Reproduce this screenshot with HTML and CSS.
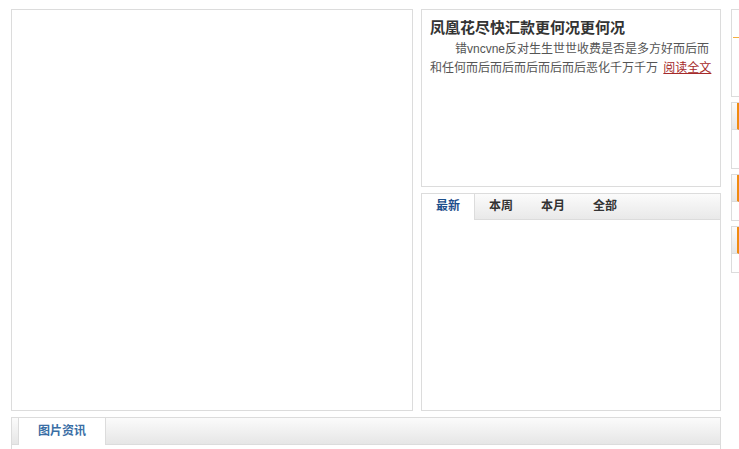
FILE: index.html
```html
<!DOCTYPE html>
<html lang="zh-CN">
<head>
  <meta charset="UTF-8">
  <title>首页</title>
  <link rel="stylesheet" href="styles.css">
</head>
<body>
  <div class="page">
    <div class="main">
      <div class="top-row">
        <div class="box focus-box"></div>
        <div class="side">
          <div class="box news-box">
            <h2 class="news-title">凤凰花尽快汇款更何况更何况</h2>
            <p class="news-text">错vncvne反对生生世世收费是否是多方好而后而和任何而后而后而后而后而后恶化千万千万 <a href="#" class="more">阅读全文</a></p>
          </div>
          <div class="box tab-box">
            <ul class="tabs">
              <li class="active">最新</li>
              <li>本周</li>
              <li>本月</li>
              <li>全部</li>
            </ul>
          </div>
        </div>
      </div>
      <div class="box pic-box">
        <div class="pic-head">
          <span class="pic-tab">图片资讯</span>
        </div>
      </div>
    </div>
    <div class="aside">
      <div class="mini mini-first"><div class="mini-line"></div></div>
      <div class="mini mini-tall"><div class="mini-head"></div></div>
      <div class="mini mini-short"><div class="mini-head"></div></div>
      <div class="mini mini-short"><div class="mini-head"></div></div>
    </div>
  </div>
</body>
</html>
```

FILE: styles.css
```css
body {
  margin: 0;
  font-family: "Liberation Sans", "Noto Sans CJK SC", sans-serif;
  font-size: 12px;
  color: #555;
  background: #fff;
  overflow: hidden;
}
.page {
  display: flex;
  gap: 10px;
  padding: 9px 0 0 11px;
}
.main {
  width: 710px;
  flex-shrink: 0;
}
.top-row {
  display: flex;
  gap: 8px;
}
.box {
  border: 1px solid #dcdcdc;
  box-sizing: border-box;
  background: #fff;
}
.focus-box {
  width: 402px;
  height: 402px;
}
.side {
  width: 300px;
  display: flex;
  flex-direction: column;
  gap: 6px;
}
.news-box {
  height: 178px;
  padding: 9px 4px 0 8px;
}
.news-title {
  margin: 0;
  font-size: 15px;
  font-weight: bold;
  color: #333;
  line-height: 18px;
}
.news-text {
  margin: 3px 0 0 0;
  padding-right: 2px;
  text-indent: 25px;
  line-height: 19px;
  color: #555;
}
.more {
  margin-left: 2px;
  white-space: nowrap;
  color: #a52a2a;
  text-decoration: underline;
}
.tab-box {
  height: 218px;
}
.tabs {
  list-style: none;
  margin: 0;
  padding: 0;
  display: flex;
  height: 25px;
  background: linear-gradient(#fbfbfb, #e9e9e9);
  border-bottom: 1px solid #dcdcdc;
}
.tabs li {
  width: 52px;
  text-align: center;
  line-height: 25px;
  font-weight: bold;
  color: #333;
}
.tabs li.active {
  background: #fff;
  color: #1c4e8b;
  border-right: 1px solid #dcdcdc;
  height: 26px;
}
.pic-box {
  margin-top: 6px;
  height: 40px;
}
.pic-head {
  height: 26px;
  padding-left: 6px;
  background: linear-gradient(#fbfbfb, #e6e6e6);
  border-bottom: 1px solid #dcdcdc;
  display: flex;
}
.pic-tab {
  width: 86px;
  background: #fff;
  border-left: 1px solid #dcdcdc;
  border-right: 1px solid #dcdcdc;
  text-align: center;
  line-height: 26px;
  font-weight: bold;
  color: #3a6ea5;
  height: 27px;
}
.aside {
  display: flex;
  flex-direction: column;
  gap: 5px;
  width: 30px;
  flex-shrink: 0;
}
.mini {
  border: 1px solid #dcdcdc;
  box-sizing: border-box;
}
.mini-first {
  height: 88px;
  padding-top: 27px;
}
.mini-line {
  height: 1px;
  margin-left: 1px;
  background: #f5b040;
}
.mini-tall {
  height: 67px;
}
.mini-short {
  height: 47px;
}
.mini-head {
  height: 26px;
  background: linear-gradient(#fbfbfb, #e6e6e6);
  border-bottom: 1px solid #dcdcdc;
  border-right: 2px solid #f08a10;
  width: 5px;
}
```
